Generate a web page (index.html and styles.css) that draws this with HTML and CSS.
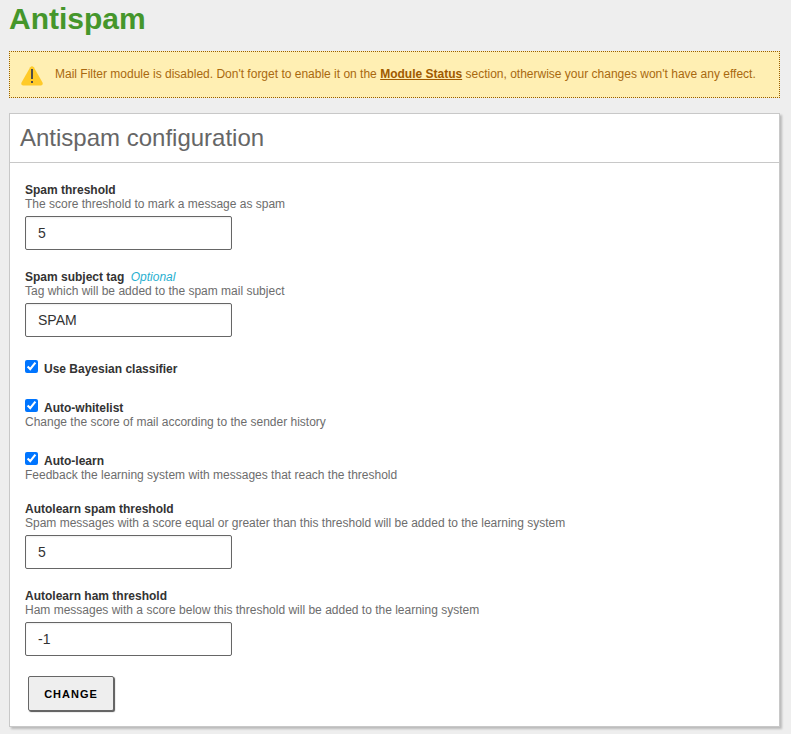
FILE: index.html
```html
<!DOCTYPE html>
<html lang="en">
<head>
<meta charset="utf-8">
<title>Antispam</title>
<link rel="stylesheet" href="styles.css">
</head>
<body>
<h1>Antispam</h1>
<div class="note">
  <svg class="note-icon" width="22" height="20" viewBox="0 0 22 20" aria-hidden="true">
    <path d="M9.2 1.3Q11 -1 12.8 1.3L21.5 16.6Q22.4 19.2 19.9 19.5H2.1Q-.4 19.2 .5 16.6Z" fill="#ffca28"/>
    <path d="M10 3h2v10h-2zM10 15h2v2h-2z" fill="#504d48"/>
  </svg>
  <p>Mail Filter module is disabled. Don't forget to enable it on the <a href="#">Module Status</a> section, otherwise your changes won't have any effect.</p>
</div>
<section class="panel">
  <h2>Antispam configuration</h2>
  <form>
    <div class="field">
      <label for="threshold">Spam threshold</label>
      <span class="hint">The score threshold to mark a message as spam</span>
      <input type="text" id="threshold" value="5">
    </div>
    <div class="field">
      <label for="tag">Spam subject tag <em>Optional</em></label>
      <span class="hint">Tag which will be added to the spam mail subject</span>
      <input type="text" id="tag" value="SPAM">
    </div>
    <div class="option">
      <label><input type="checkbox" checked>Use Bayesian classifier</label>
    </div>
    <div class="option">
      <label><input type="checkbox" checked>Auto-whitelist</label>
      <span class="hint">Change the score of mail according to the sender history</span>
    </div>
    <div class="option">
      <label><input type="checkbox" checked>Auto-learn</label>
      <span class="hint">Feedback the learning system with messages that reach the threshold</span>
    </div>
    <div class="field">
      <label for="learn-spam">Autolearn spam threshold</label>
      <span class="hint">Spam messages with a score equal or greater than this threshold will be added to the learning system</span>
      <input type="text" id="learn-spam" value="5">
    </div>
    <div class="field">
      <label for="learn-ham">Autolearn ham threshold</label>
      <span class="hint">Ham messages with a score below this threshold will be added to the learning system</span>
      <input type="text" id="learn-ham" value="-1">
    </div>
    <button type="button">CHANGE</button>
  </form>
</section>
</body>
</html>
```
FILE: styles.css
```css
* { box-sizing: border-box; }
body {
  margin: 0;
  min-height: 734px;
  padding: 0 11px 0 9px;
  background: #eee;
  color: #333;
  font: 12px/14px "Liberation Sans", Arial, sans-serif;
}
h1 {
  margin: 0 0 15px;
  padding-top: 2px;
  height: 36px;
  color: #45962b;
  font-size: 30px;
  line-height: 34px;
}
.note {
  display: flex;
  align-items: flex-start;
  gap: 12px;
  height: 47px;
  margin-bottom: 15px;
  padding: 14px 11px;
  border: 1px dotted #985e00;
  background: #ffefb3;
  color: #a9690f;
}
.note-icon { flex: none; }
.note p { margin: 1px 0 0; white-space: nowrap; }
.note a { color: #a05a00; font-weight: bold; }
.panel {
  height: 614px;
  border: 1px solid #c8c8c8;
  background: #fff;
  box-shadow: 2px 2px 2px #bbb;
}
h2 {
  margin: 0;
  height: 49px;
  padding: 0 10px;
  border-bottom: 1px solid #c8c8c8;
  color: #666;
  font-size: 24px;
  font-weight: normal;
  line-height: 48px;
}
form { padding: 20px 15px 0; }
.field { margin-bottom: 20px; }
label { display: block; font-weight: bold; }
label em { margin-left: 3px; color: #28afd0; font-weight: normal; }
.hint { display: block; color: #6d6d6d; }
input[type="text"] {
  display: block;
  width: 207px;
  height: 34px;
  margin: 5px 0 0;
  padding: 0 12px;
  border: 1px solid #666;
  border-radius: 2px;
  background: #fff;
  box-shadow: inset 0 1px 2px #eee;
  color: #333;
  font: 14px "Liberation Sans", Arial, sans-serif;
}
.option { margin: 25px 0; }
.option + .field { margin-top: -5px; }
.option label { display: flex; gap: 6px; }
input[type="checkbox"] { width: 13px; height: 13px; margin: -2px 0 0; }
button {
  display: block;
  width: 86px;
  height: 35px;
  margin-left: 3px;
  padding: 0;
  border: 1px solid #666;
  border-radius: 2px;
  background: #eee;
  box-shadow: 1px 1px 1px #555;
  color: #000;
  font: bold 11px "Liberation Sans", Arial, sans-serif;
  letter-spacing: 1px;
}
```
